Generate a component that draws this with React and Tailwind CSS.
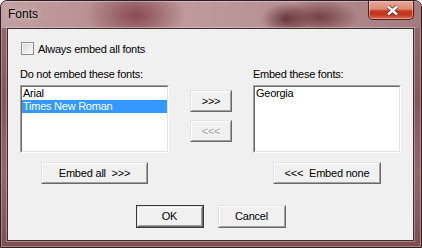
function Btn({ children, className = '', disabled = false, isDefault = false }) {
  return (
    <div className={`${isDefault ? 'border border-[#3a3a3a]' : ''} ${className}`}>
      <div className="h-full w-full border border-t-[#e3e3e3] border-l-[#e3e3e3] border-b-[#696969] border-r-[#696969]">
        <div
          className={`h-full w-full border border-t-white border-l-white border-b-[#a0a0a0] border-r-[#a0a0a0] bg-[#f0f0f0] flex items-center justify-center whitespace-pre text-[11px] leading-[13px] tracking-[-0.2px] ${
            disabled ? 'text-[#a0a0a0] [text-shadow:1px_1px_0_#ffffff]' : 'text-black'
          }`}
        >
          {children}
        </div>
      </div>
    </div>
  );
}

function ListBox({ items, selected = -1 }) {
  return (
    <div className="h-[68px] w-full border border-t-[#a0a0a0] border-l-[#a0a0a0] border-b-white border-r-white">
      <div className="h-full w-full border border-t-[#696969] border-l-[#696969] border-b-[#e3e3e3] border-r-[#e3e3e3] bg-white">
        {items.map((it, i) => (
          <div
            key={it}
            className={`h-[13px] leading-[13px] pl-[1px] text-[11px] tracking-[-0.25px] whitespace-nowrap ${
              i === selected ? 'bg-[#3399ff] text-white' : 'text-black'
            }`}
          >
            {it}
          </div>
        ))}
      </div>
    </div>
  );
}

export default function App() {
  return (
    <div className="w-[422px] h-[248px] bg-white font-['Liberation_Sans',Arial,sans-serif]">
      <div className="w-full h-full rounded-t-[7px] border border-[#2e2022] bg-[linear-gradient(180deg,#9a6b6f_0%,#85555a_40%,#94666a_70%,#7e4e53_100%)] shadow-[inset_0_0_0_1px_rgba(255,255,255,0.3)] flex flex-col overflow-hidden">
        {/* Title bar */}
        <div className="h-[27px] flex items-start justify-between rounded-t-[6px] bg-[radial-gradient(ellipse_50px_30px_at_135px_14px,rgba(128,62,68,0.85),transparent),radial-gradient(ellipse_25px_16px_at_285px_18px,rgba(95,42,48,0.85),transparent),radial-gradient(ellipse_40px_18px_at_318px_16px,rgba(105,50,56,0.85),transparent),linear-gradient(90deg,#c2a0a2_0%,#b89093_22%,#bf9a9d_45%,#b99497_60%,#ad8588_85%,#a37b7e_100%)] shadow-[inset_0_1px_0_rgba(255,255,255,0.35)]">
          <div className="pl-[7px] pt-[6px] text-[12px] leading-[15px] text-black [text-shadow:0_0_6px_rgba(255,255,255,0.8)]">
            Fonts
          </div>
          <div className="mr-[7px] w-[46px] h-[19px] rounded-b-[5px] border border-t-0 border-[#4b2220] bg-[linear-gradient(180deg,#e6a99a_0%,#dc8a76_45%,#c63a22_55%,#c2361f_75%,#dc6a4c_100%)] shadow-[inset_0_0_0_1px_rgba(255,220,210,0.45)] flex items-center justify-center">
            <svg width="13" height="11" viewBox="0 0 13 11" className="ml-[2px]">
              <path d="M2 1.5 L11 9.5 M11 1.5 L2 9.5" stroke="#4a1c14" strokeOpacity="0.75" strokeWidth="4.2" fill="none" />
              <path d="M2 1.5 L11 9.5 M11 1.5 L2 9.5" stroke="#ffffff" strokeWidth="2.4" fill="none" />
            </svg>
          </div>
        </div>

        {/* Client area */}
        <div className="ml-[6px] mr-[7px] mb-[6px] flex-1 border border-[#3e2c2e] bg-[#f0f0f0] shadow-[0_0_0_1px_rgba(255,235,235,0.35)] flex flex-col text-black">
          {/* Checkbox row */}
          <div className="pt-[13px] pl-[13px] flex items-center h-[26px]">
            <div className="w-[13px] h-[13px] border border-[#8e8f8f] bg-[linear-gradient(135deg,#d8d8d8,#fdfdfd)] shadow-[inset_0_0_0_1px_#f4f4f4]" />
            <span className="ml-[4px] text-[11px] leading-[13px] tracking-[-0.25px] mt-[2px]">Always embed all fonts</span>
          </div>

          {/* Columns */}
          <div className="mt-[13px] pl-[12px] flex">
            <div className="w-[149px] flex flex-col">
              <div className="h-[13px] text-[11px] leading-[13px] tracking-[-0.25px] whitespace-nowrap">Do not embed these fonts:</div>
              <div className="mt-[4px]">
                <ListBox items={['Arial', 'Times New Roman']} selected={1} />
              </div>
              <Btn className="mt-[9px] self-center w-[107px] h-[22px]">{'Embed all  >>>'}</Btn>
            </div>

            <div className="ml-[21px] w-[42px] pt-[22px] flex flex-col gap-[8px]">
              <Btn className="w-[42px] h-[22px]">{'>>>'}</Btn>
              <Btn className="w-[42px] h-[22px]" disabled>{'<<<'}</Btn>
            </div>

            <div className="ml-[21px] w-[148px] flex flex-col">
              <div className="h-[13px] text-[11px] leading-[13px] tracking-[-0.25px] whitespace-nowrap">Embed these fonts:</div>
              <div className="mt-[4px]">
                <ListBox items={['Georgia']} />
              </div>
              <Btn className="mt-[9px] self-center w-[108px] h-[22px]">{'<<<  Embed none'}</Btn>
            </div>
          </div>

          {/* OK / Cancel */}
          <div className="mt-[21px] flex justify-center gap-[14px]">
            <Btn className="w-[68px] h-[23px]" isDefault>OK</Btn>
            <Btn className="w-[68px] h-[23px]">Cancel</Btn>
          </div>
        </div>
      </div>
    </div>
  );
}
